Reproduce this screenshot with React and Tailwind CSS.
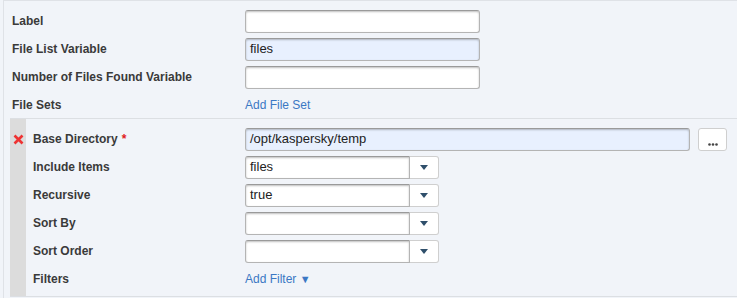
import React from "react";

const font = { fontFamily: '"Liberation Sans", Arial, sans-serif' };

const TextInput = ({ value, filled, w = "w-[235px]" }) => (
    <div className={`${w} h-[23px] rounded-[3px] border border-[#b4b4b4] border-t-[#9a9a9a] shadow-[inset_0_1px_2px_rgba(0,0,0,0.25)] px-[4px] flex items-center text-[13px] text-[#222] ${filled ? "bg-[#e8f0fe]" : "bg-white"}`}>
        {value}
    </div>
)

const SelectInput = ({ value }) => (
    <div className="flex h-[23px]">
        <div className="w-[165px] h-full rounded-l-[3px] border border-[#b4b4b4] border-t-[#9a9a9a] shadow-[inset_0_1px_2px_rgba(0,0,0,0.25)] bg-white px-[4px] flex items-center text-[13px] text-[#222]">
            {value}
        </div>
        <div className="w-[29px] h-full rounded-r-[3px] border border-l-0 border-[#cfcfcf] bg-white flex items-center justify-center">
            <svg width="8" height="5" viewBox="0 0 8 5"><path d="M0 0h8L4 5z" fill="#2f4f6b" /></svg>
        </div>
    </div>
)

const Row = ({ label, required, children, h = "h-[28px]", labelW = "w-[233px]" }) => (
    <div className={`flex items-center ${h}`}>
        <div className={`${labelW} flex-none text-[12px] font-bold text-[#3a3a3a]`}>
            {label}{required ? <span className="text-[#e02020] ml-[4px]">*</span> : ""}
        </div>
        {children}
    </div>
)

export default function App() {
    return (
        <div style={font} className="w-[737px] h-[298px] bg-[#f1f4f9] overflow-hidden">
            <div className="ml-[3px] border-l border-t border-[#dfe2e7] pt-[6px] h-full">
                <div className="pl-[8px]">
                    <Row label="Label"><TextInput /></Row>
                    <Row label="File List Variable"><TextInput value="files" filled /></Row>
                    <Row label="Number of Files Found Variable"><TextInput /></Row>
                    <Row label="File Sets" h="h-[27px]">
                        <span className="text-[12px] text-[#3b78c4]">Add File Set</span>
                    </Row>
                </div>

                <div className="ml-[6px] flex border-t border-b border-[#dcdfe3] h-[179px]">
                    <div className="w-[16px] flex-none bg-[#dcdcdc] pt-[15px] flex justify-center">
                        <svg width="11" height="11" viewBox="0 0 11 11">
                            <path d="M1.5 1.5l8 8M9.5 1.5l-8 8" stroke="#ee3333" strokeWidth="2.6" />
                        </svg>
                    </div>
                    <div className="flex-1 pl-[7px] pt-[6px]">
                        <Row label="Base Directory" required labelW="w-[212px]">
                            <TextInput value="/opt/kaspersky/temp" filled w="w-[445px]" />
                            <div className="ml-[8px] w-[29px] h-[23px] rounded-[3px] border border-[#cfcfcf] bg-white flex items-end justify-center pb-[4px]">
                                <svg width="10" height="3" viewBox="0 0 10 3">
                                    <circle cx="1.5" cy="1.5" r="1.3" fill="#444" />
                                    <circle cx="5" cy="1.5" r="1.3" fill="#444" />
                                    <circle cx="8.5" cy="1.5" r="1.3" fill="#444" />
                                </svg>
                            </div>
                        </Row>
                        <Row label="Include Items" labelW="w-[212px]"><SelectInput value="files" /></Row>
                        <Row label="Recursive" labelW="w-[212px]"><SelectInput value="true" /></Row>
                        <Row label="Sort By" labelW="w-[212px]"><SelectInput /></Row>
                        <Row label="Sort Order" labelW="w-[212px]"><SelectInput /></Row>
                        <Row label="Filters" labelW="w-[212px]">
                            <span className="text-[12px] text-[#3b78c4]">Add Filter <span className="text-[11px]">▼</span></span>
                        </Row>
                    </div>
                </div>
            </div>
        </div>
    )
}
